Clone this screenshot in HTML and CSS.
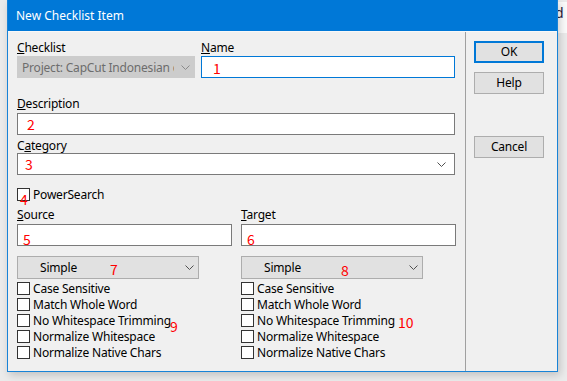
FILE: index.html
```html
<!DOCTYPE html>
<html>
<head>
<meta charset="utf-8">
<link rel="stylesheet" href="styles.css">
</head>
<body>
<div class="bgtext">d</div>
<div class="window">
  <div class="titlebar">New Checklist Item</div>
  <div class="client">
    <div class="main">
      <div class="row-top">
        <div class="field">
          <div class="lbl"><u>C</u>hecklist</div>
          <div class="combo disabled"><span class="ctext">Project: CapCut Indonesian c</span><svg class="chev" width="9" height="5" viewBox="0 0 9 5"><polyline points="0.5,0.5 4.5,4.5 8.5,0.5" fill="none" stroke="#8a8a8a" stroke-width="1"/></svg></div>
        </div>
        <div class="field">
          <div class="lbl"><u>N</u>ame</div>
          <div class="input focus"><span class="mark m1">1</span></div>
        </div>
      </div>
      <div class="lbl lbl-desc"><u>D</u>escription</div>
      <div class="input"><span class="mark m2">2</span></div>
      <div class="lbl lbl-cat">C<u>a</u>tegory</div>
      <div class="combo white"><span class="mark m3">3</span><span class="ctext"></span><svg class="chev" width="9" height="5" viewBox="0 0 9 5"><polyline points="0.5,0.5 4.5,4.5 8.5,0.5" fill="none" stroke="#505050" stroke-width="1"/></svg></div>
      <div class="check power"><span class="box"></span><span>PowerSearch</span><span class="mark m4">4</span></div>
      <div class="cols">
        <div class="col">
          <div class="lbl"><u>S</u>ource</div>
          <div class="input"><span class="mark m5">5</span></div>
          <div class="combo btn"><span class="ctext">Simple</span><span class="mark m7">7</span><svg class="chev" width="9" height="5" viewBox="0 0 9 5"><polyline points="0.5,0.5 4.5,4.5 8.5,0.5" fill="none" stroke="#505050" stroke-width="1"/></svg></div>
          <div class="checks">
            <div class="check"><span class="box"></span><span>Case Sensitive</span></div>
            <div class="check"><span class="box"></span><span>Match Whole Word</span></div>
            <div class="check"><span class="box"></span><span>No Whitespace Trimming</span><span class="mark m9">9</span></div>
            <div class="check"><span class="box"></span><span>Normalize Whitespace</span></div>
            <div class="check"><span class="box"></span><span>Normalize Native Chars</span></div>
          </div>
        </div>
        <div class="col">
          <div class="lbl"><u>T</u>arget</div>
          <div class="input"><span class="mark m6">6</span></div>
          <div class="combo btn"><span class="ctext">Simple</span><span class="mark m8">8</span><svg class="chev" width="9" height="5" viewBox="0 0 9 5"><polyline points="0.5,0.5 4.5,4.5 8.5,0.5" fill="none" stroke="#505050" stroke-width="1"/></svg></div>
          <div class="checks">
            <div class="check"><span class="box"></span><span>Case Sensitive</span></div>
            <div class="check"><span class="box"></span><span>Match Whole Word</span></div>
            <div class="check"><span class="box"></span><span>No Whitespace Trimming</span><span class="mark m10">10</span></div>
            <div class="check"><span class="box"></span><span>Normalize Whitespace</span></div>
            <div class="check"><span class="box"></span><span>Normalize Native Chars</span></div>
          </div>
        </div>
      </div>
    </div>
    <div class="side">
      <div class="button default">OK</div>
      <div class="button">Help</div>
      <div class="button cancel">Cancel</div>
    </div>
  </div>
</div>
</body>
</html>
```

FILE: styles.css
```css
* { box-sizing: border-box; }
html, body { margin: 0; padding: 0; }
body {
  width: 567px;
  height: 381px;
  overflow: hidden;
  background: #ebebeb;
  font-family: "Noto Sans", "Open Sans", sans-serif;
  font-size: 12px;
  letter-spacing: -0.2px;
  color: #000;
  position: relative;
}
.bgtext {
  position: absolute;
  left: 553px;
  top: 2px;
  font-size: 14px;
  color: #2a1a3a;
  background: #fbfbfb;
  width: 14px;
  height: 31px;
  line-height: 22px;
  padding-left: 2px;
}
.window {
  position: relative;
  margin-left: 7px;
  width: 551px;
  height: 372px;
  border: 1px solid #1883d7;
  border-top: none;
  background: #f0f0f0;
  box-shadow: 2px 3px 8px rgba(0,0,0,0.18);
  display: flex;
  flex-direction: column;
}
.titlebar {
  height: 31px;
  background: #0078d7;
  color: #fff;
  padding: 8px 0 0 8px;
  font-size: 12px;
  letter-spacing: 0;
  line-height: 16px;
}
.client {
  flex: 1;
  display: flex;
  border-top: 1px solid #f8f8f8;
}
.main {
  width: 458px;
  padding: 8px 10px 0 9px;
  border-right: 1px solid #a0a0a0;
}
.side {
  flex: 1;
  padding: 9px 0 0 8px;
  display: flex;
  flex-direction: column;
}
.lbl { height: 15px; line-height: 15px; }
u { text-decoration: underline; text-underline-offset: 1px; }
.row-top { display: flex; gap: 6px; }
.row-top .field:first-child { width: 178px; }
.row-top .field:last-child { flex: 1; }
.row-top .lbl { margin-bottom: 1px; }
.input {
  position: relative;
  height: 22px;
  background: #fff;
  border: 1px solid #7a7a7a;
}
.input.focus { border-color: #0078d7; }
.combo {
  position: relative;
  height: 22px;
  border: 1px solid #7a7a7a;
  background: #fff;
  display: flex;
  align-items: center;
  padding: 0 8px 0 4px;
}
.combo .ctext { flex: 1; white-space: nowrap; overflow: hidden; }
.combo.disabled { background: #cccccc; border-color: #cccccc; color: #6d6d6d; padding-right: 4px; }
.combo.disabled .ctext { margin-right: 7px; }
.combo.btn {
  width: 182px;
  height: 23px;
  background: #e1e1e1;
  border-color: #adadad;
  padding-left: 22px;
  padding-right: 4px;
}
.lbl-desc { margin-top: 18px; margin-bottom: 2px; }
.lbl-cat { margin-top: 3px; }
.check {
  position: relative;
  display: flex;
  align-items: center;
  height: 16px;
  gap: 3px;
  white-space: nowrap;
}
.box {
  width: 13px;
  height: 13px;
  border: 1px solid #333;
  background: #fff;
  flex: none;
}
.power { margin-top: 11px; }
.cols { display: grid; grid-template-columns: 215px 215px; column-gap: 9px; margin-top: 5px; }
.col .lbl { margin-bottom: 2px; }
.col .combo.btn { margin-top: 10px; }
.checks { margin-top: 1px; }
.button {
  width: 70px;
  height: 22px;
  border: 1px solid #adadad;
  background: #e1e1e1;
  text-align: center;
  line-height: 20px;
  margin-bottom: 9px;
}
.button.default { border: 2px solid #0078d7; line-height: 18px; }
.button.cancel { margin-top: 33px; }
.mark {
  position: absolute;
  font-family: "Noto Sans CJK SC", sans-serif;
  font-size: 14px;
  line-height: 14px;
  letter-spacing: 0;
  color: #ff0000;
}
.m1 { left: 11px; top: 4px; }
.m2 { left: 9px; top: 3px; }
.m3 { left: 7px; top: 3px; }
.m4 { left: 3px; top: 6px; }
.m5 { left: 5px; top: 7px; }
.m6 { left: 5px; top: 7px; }
.m7 { left: 92px; top: 5px; }
.m8 { left: 99px; top: 6px; }
.m9 { left: 153px; top: 7px; }
.m10 { left: 157px; top: 3px; }
```
